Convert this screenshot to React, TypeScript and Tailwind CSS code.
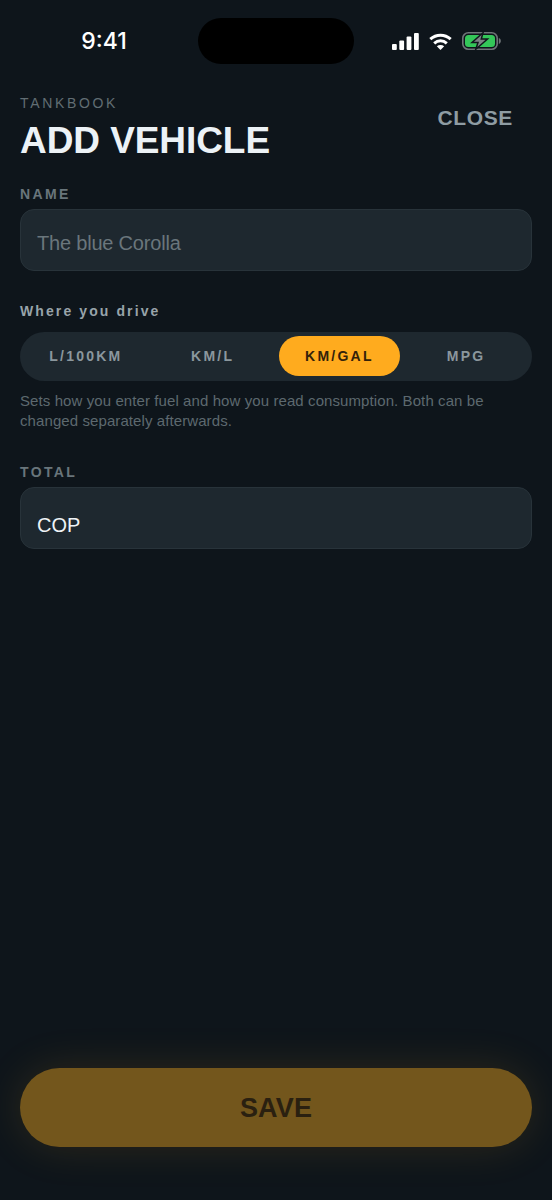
const UNITS = ['L/100KM', 'KM/L', 'KM/GAL', 'MPG'];
const ACTIVE_UNIT = 'KM/GAL';

function StatusIcons() {
  return (
    <div className="flex items-center gap-[10px]">
      <svg width="27" height="17" viewBox="0 0 27 17" fill="#fff">
        <rect x="0" y="11" width="4.800" height="6" rx="1" />
        <rect x="7.300" y="7.500" width="4.800" height="9.500" rx="1" />
        <rect x="14.600" y="3.500" width="4.800" height="13.500" rx="1" />
        <rect x="22" y="0" width="4.800" height="17" rx="1" />
      </svg>
      <svg width="23" height="17" viewBox="0 0 23 17" fill="none" stroke="#fff" strokeWidth="3">
        <path d="M1.300 6.200C7.200 .9 15.800 .9 21.700 6.200" />
        <path d="M5.200 10.300C8.900 7 14.100 7 17.800 10.300" />
        <path d="M11.500 17L7.800 13.300C10 11.500 13 11.500 15.200 13.300Z" fill="#fff" stroke="none" />
      </svg>
      <svg width="39" height="18" viewBox="0 0 39 18" fill="none">
        <rect x="0.800" y="0.800" width="34.400" height="16.400" rx="5.500" stroke="#6f7578" strokeWidth="1.600" />
        <rect x="3" y="3" width="30" height="12" rx="3.500" fill="#34c759" />
        <path d="M36.800 6c1.300.4 2 1.600 2 3s-.7 2.600-2 3z" fill="#6f7578" />
        <path d="M21 .8L10 10.500h6L13.800 17.200 25.500 7h-6.200z" fill="#7d8385" stroke="#10171c" strokeWidth="1.500" />
      </svg>
    </div>
  );
}

function Field({ label, value, muted }: { label: string; value: string; muted?: boolean }) {
  return (
    <div>
      <div className="mb-[6px] text-[14px] leading-[18px] font-semibold tracking-[0.17em] text-[#69757b]">{label}</div>
      <div className="flex h-[62px] items-center rounded-[14px] border border-[#28333a] bg-[#1e282f] px-4">
        <span className={`text-[20px] leading-6 ${muted ? 'mt-[6px] tracking-[-0.01em] text-[#6a767c]' : 'mt-[14px] text-[#eef3f6]'}`}>{value}</span>
      </div>
    </div>
  );
}

export default function App() {
  return (
    <div className="flex h-[1200px] w-[552px] flex-col overflow-hidden bg-[#0e151b] font-['Liberation_Sans',Arial,sans-serif]">
      <div className="mt-[18px] flex h-[46px] items-center justify-between">
        <div className="w-[198px] pl-[10px] text-center font-['Inter',sans-serif] text-[23px] font-medium text-white">9:41</div>
        <div className="h-[46px] w-[156px] rounded-[23px] bg-black"></div>
        <div className="flex w-[198px] justify-end pr-[51px]">
          <StatusIcons />
        </div>
      </div>

      <div className="flex-1 px-5">
        <div className="mt-[30px] flex items-start justify-between">
          <div>
            <div className="text-[14px] leading-[18px] font-medium tracking-[0.19em] text-[#616d73]">TANKBOOK</div>
            <h1 className="mt-[8px] text-[37px] leading-[42px] font-bold tracking-[-0.002em] text-[#ecf2f6]">ADD VEHICLE</h1>
          </div>
          <button className="mt-[10px] mr-[19px] text-[21px] leading-7 font-bold tracking-[0.03em] text-[#8e9ca3]">CLOSE</button>
        </div>

        <div className="mt-[23px]">
          <Field label="NAME" value="The blue Corolla" muted />
        </div>

        <div className="mt-[31px] text-[14px] leading-[18px] font-semibold tracking-[0.15em] text-[#98a4aa]">Where you drive</div>
        <div className="mt-[12px] flex h-[49px] items-start gap-[5px] rounded-[25px] bg-[#1e282f] px-[5px] pt-1">
          {UNITS.map((unit) => (
            <div
              key={unit}
              className={`flex h-10 flex-1 items-center justify-center rounded-[20px] text-[14px] font-bold tracking-[0.16em] ${
                unit === ACTIVE_UNIT ? 'bg-[#ffab1e] text-[#33220a]' : 'text-[#8b979d]'
              }`}
            >
              {unit}
            </div>
          ))}
        </div>
        <p className="mt-[10px] text-[15px] leading-5 tracking-[0.006em] text-[#5d696f]">
          Sets how you enter fuel and how you read consumption. Both can be changed separately afterwards.
        </p>

        <div className="mt-[32px]">
          <Field label="TOTAL" value="COP" />
        </div>
      </div>

      <div className="px-5 pb-[53px]">
        <button className="flex h-[79px] w-full items-center justify-center rounded-[40px] bg-[#73561c] pt-px text-[27px] font-bold tracking-[0.005em] text-[#2a2010] shadow-[0_0_44px_rgba(255,171,30,0.13)]">
          SAVE
        </button>
      </div>
    </div>
  );
}
